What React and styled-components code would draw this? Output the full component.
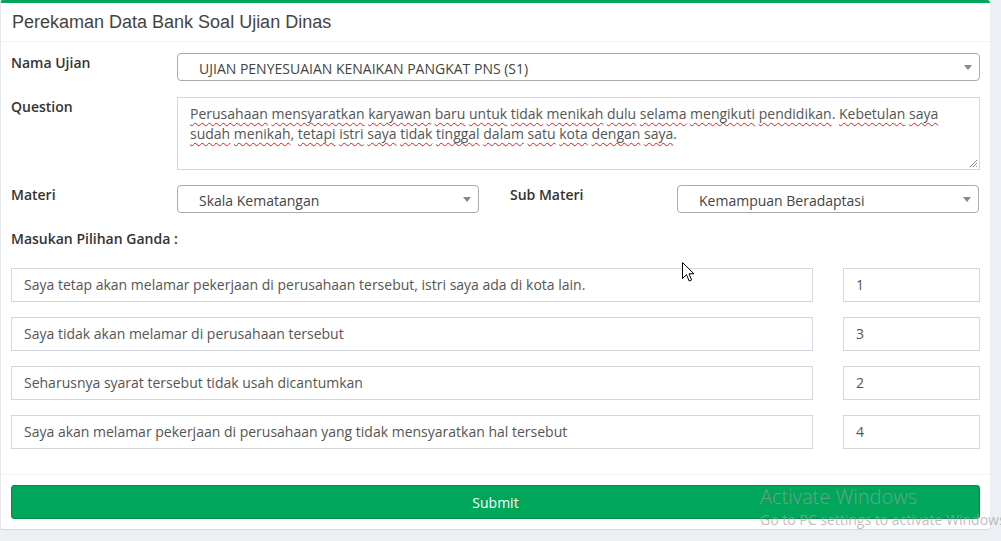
import React from 'react';
import styled, { createGlobalStyle } from 'styled-components';

const GlobalStyle = createGlobalStyle`
  html, body {
    margin: 0;
    padding: 0;
    background: #ecf0f5;
    font-family: 'Open Sans', 'Liberation Sans', sans-serif;
    font-size: 14px;
    color: #333;
    overflow: hidden;
  }
  * { box-sizing: border-box; }
`;

const Page = styled.div`
  position: relative;
  width: 1001px;
  height: 541px;
  overflow: hidden;
`;

const Box = styled.div`
  width: 990px;
  background: #fff;
  border-top: 3px solid #00a65a;
  border-left: 1px solid #e4e8ee;
  border-radius: 3px;
  box-shadow: 0 1px 1px rgba(0, 0, 0, 0.1);
`;

const BoxHeader = styled.div`
  padding: 10px 10px 10px 11px;
  border-bottom: 1px solid #f4f4f4;
`;

const BoxTitle = styled.h3`
  margin: 0;
  font-family: 'Liberation Sans', Arial, sans-serif;
  font-size: 18px;
  font-weight: 400;
  line-height: 18px;
  color: #444;
`;

const BoxBody = styled.div`
  padding: 11px 10px 25px 10px;
  display: flex;
  flex-direction: column;
`;

const FormRow = styled.div`
  display: grid;
  grid-template-columns: 166px 1fr;
  margin-bottom: ${p => p.$gap || 16}px;
`;

const SplitRow = styled.div`
  display: grid;
  grid-template-columns: 166px 302px 198px 302px;
  margin-bottom: 16px;
`;

const Label = styled.label`
  font-weight: 600;
  line-height: 20px;
  color: #333;
  padding-left: ${p => p.$indent || 0}px;
`;

const SectionLabel = styled(Label)`
  display: block;
  margin-bottom: 19px;
`;

const Select = styled.div`
  position: relative;
  height: 28px;
  border: 1px solid #aaa;
  border-radius: 4px;
  padding: 0 30px 0 21px;
  line-height: 30px;
  color: #444;
  white-space: nowrap;
  overflow: hidden;

  &::after {
    content: '';
    position: absolute;
    right: 7px;
    top: 11px;
    border-left: 4px solid transparent;
    border-right: 4px solid transparent;
    border-top: 5px solid #888;
  }
`;

const TextArea = styled.div`
  position: relative;
  height: 73px;
  border: 1px solid #d2d6de;
  padding: 6px 12px;
  line-height: 20px;
  color: #555;
`;

const Misspelt = styled.span`
  text-decoration: underline wavy #e02020;
  text-decoration-thickness: 1px;
  text-underline-offset: 3px;
  text-decoration-skip-ink: none;
`;

const Grip = styled.svg`
  position: absolute;
  right: 1px;
  bottom: 1px;
`;

const OptionRow = styled.div`
  display: grid;
  grid-template-columns: 802px 137px;
  column-gap: 30px;
  margin-bottom: 15px;

  &:last-child { margin-bottom: 0; }
`;

const Field = styled.div`
  height: 34px;
  border: 1px solid #d2d6de;
  padding: 0 12px;
  line-height: 32px;
  color: #555;
  white-space: nowrap;
  overflow: hidden;
`;

const BoxFooter = styled.div`
  border-top: 1px solid #f4f4f4;
  padding: 10px 10px 10px 10px;
`;

const SubmitButton = styled.button`
  display: block;
  width: 100%;
  height: 34px;
  background: #00a65a;
  border: 1px solid #008d4c;
  border-radius: 3px;
  color: #fff;
  font-family: 'Open Sans', 'Liberation Sans', sans-serif;
  font-size: 14px;
  cursor: pointer;
`;

const Watermark = styled.div`
  position: absolute;
  left: 760px;
  top: 484px;
  font-family: 'Open Sans', 'Liberation Sans', sans-serif;
  color: rgba(160, 160, 160, 0.7);
  white-space: nowrap;
  pointer-events: none;
`;

const WatermarkTitle = styled.div`
  font-size: 20px;
  line-height: 26px;
  font-weight: 300;
`;

const WatermarkLine = styled.div`
  font-size: 14px;
  line-height: 20px;
`;

const Cursor = styled.svg`
  position: absolute;
  left: 682px;
  top: 262px;
  pointer-events: none;
`;

const questionText =
  'Perusahaan mensyaratkan karyawan baru untuk tidak menikah dulu selama mengikuti pendidikan. Kebetulan saya sudah menikah, tetapi istri saya tidak tinggal dalam satu kota dengan saya.';

const options = [
  { text: 'Saya tetap akan melamar pekerjaan di perusahaan tersebut, istri saya ada di kota lain.', score: 1 },
  { text: 'Saya tidak akan melamar di perusahaan tersebut', score: 3 },
  { text: 'Seharusnya syarat tersebut tidak usah dicantumkan', score: 2 },
  { text: 'Saya akan melamar pekerjaan di perusahaan yang tidak mensyaratkan hal tersebut', score: 4 },
];

// every word gets the spell-check squiggle, the punctuation stays outside it
const renderSpellchecked = text =>
  text.split(' ').map((word, i) => {
    const m = word.match(/^(.*?)([.,]?)$/);
    return (
      <React.Fragment key={i}>
        {i > 0 && ' '}
        <Misspelt>{m[1]}</Misspelt>
        {m[2]}
      </React.Fragment>
    );
  });

export default function App() {
  return (
    <Page>
      <GlobalStyle />
      <Box>
        <BoxHeader>
          <BoxTitle>Perekaman Data Bank Soal Ujian Dinas</BoxTitle>
        </BoxHeader>

        <BoxBody>
          <FormRow>
            <Label>Nama Ujian</Label>
            <Select>UJIAN PENYESUAIAN KENAIKAN PANGKAT PNS (S1)</Select>
          </FormRow>

          <FormRow $gap={15}>
            <Label>Question</Label>
            <TextArea>
              {renderSpellchecked(questionText)}
              <Grip width="9" height="9" viewBox="0 0 9 9">
                <path d="M8 1L1 8M8 4L4 8M8 7L7 8" stroke="#888" strokeWidth="1" />
              </Grip>
            </TextArea>
          </FormRow>

          <SplitRow>
            <Label>Materi</Label>
            <Select>Skala Kematangan</Select>
            <Label $indent={31}>Sub Materi</Label>
            <Select>Kemampuan Beradaptasi</Select>
          </SplitRow>

          <SectionLabel>Masukan Pilihan Ganda :</SectionLabel>

          <div>
            {options.map(opt => (
              <OptionRow key={opt.score}>
                <Field>{opt.text}</Field>
                <Field>{opt.score}</Field>
              </OptionRow>
            ))}
          </div>
        </BoxBody>

        <BoxFooter>
          <SubmitButton type="button">Submit</SubmitButton>
        </BoxFooter>
      </Box>

      <Cursor width="13" height="21" viewBox="0 0 13 21">
        <path
          d="M0.5 0.5 L0.5 16.5 L4.5 12.7 L7.2 19 L9.6 18 L7 11.8 L12 11.8 Z"
          fill="#fff"
          stroke="#000"
          strokeWidth="1"
          strokeLinejoin="round"
        />
      </Cursor>

      <Watermark>
        <WatermarkTitle>Activate Windows</WatermarkTitle>
        <WatermarkLine>Go to PC settings to activate Windows.</WatermarkLine>
      </Watermark>
    </Page>
  );
}
